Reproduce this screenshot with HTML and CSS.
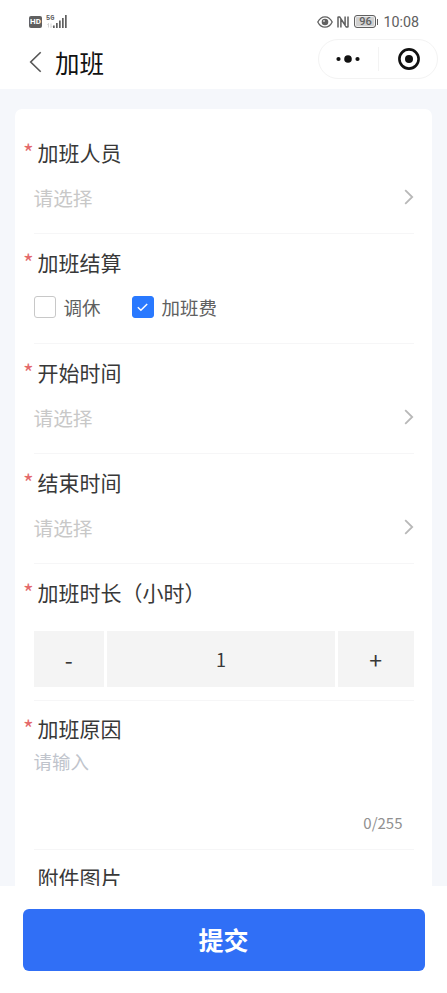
FILE: index.html
```html
<!DOCTYPE html>
<html lang="zh-CN">
<head>
<meta charset="utf-8">
<meta name="viewport" content="width=device-width, initial-scale=1">
<title>加班</title>
<link rel="stylesheet" href="styles.css">
</head>
<body>
<div class="app">
  <header class="header">
    <div class="status">
      <div class="status-left">
        <span class="hd">HD</span>
        <div class="network">
          <span class="network-type">5G</span>
          <svg class="traffic" width="6" height="5" viewBox="0 0 6 5"><path d="M1.5 4.5v-4L.3 1.8M4 .5v4l1.3-1.3" fill="none" stroke="#c2c2c2" stroke-width=".7"/></svg>
        </div>
        <svg class="signal" width="14" height="13" viewBox="0 0 14 13" fill="#606060"><path d="M0 10.4h1.7V13H0zM3 8h1.7v5H3zM6 5.5h1.7V13H6zM9 3h1.7v10H9zM12 0h1.7v13H12z"/></svg>
      </div>
      <div class="status-right">
        <svg class="eye" width="16" height="12" viewBox="0 0 16 12"><path d="M.8 6C2.500 2.500 5 .8 8 .8S13.500 2.500 15.200 6C13.500 9.500 11 11.200 8 11.200S2.500 9.500.8 6z" fill="none" stroke="#606060" stroke-width="1.300"/><circle cx="8" cy="6" r="3.300" fill="#606060"/><circle cx="7" cy="4.900" r="1" fill="#ccc"/></svg>
        <svg class="nfc" width="12" height="12" viewBox="0 0 12 12" fill="none" stroke="#606060" stroke-width="1.500"><path d="M1 11.500V1.300Q1 .9 1.400.9h1.300l5.400 8.200V.5M11 .5v10.200q0 .4-.4.4H9.300L3.900 2.900v8.600"/></svg>
        <div class="battery">96</div>
        <span class="battery-tip"></span>
        <span class="time">10:08</span>
      </div>
    </div>
    <nav class="nav">
      <svg class="back" width="13" height="22" viewBox="0 0 13 22"><path d="M11.700 1.200 1.700 11l10 9.800" fill="none" stroke="#555" stroke-width="1.600"/></svg>
      <h1 class="title">加班</h1>
      <div class="capsule">
        <svg class="more" width="24" height="8" viewBox="0 0 24 8" fill="#111"><circle cx="2.500" cy="4" r="2.100"/><circle cx="12" cy="4" r="3.800"/><circle cx="21.500" cy="4" r="2.100"/></svg>
        <span class="capsule-line"></span>
        <svg class="close" width="22" height="22" viewBox="0 0 22 22"><circle cx="11" cy="11" r="9.600" fill="none" stroke="#111" stroke-width="2.600"/><circle cx="11" cy="11" r="4" fill="#111"/></svg>
      </div>
    </nav>
  </header>

  <main class="content">
    <form class="card">
      <section class="item">
        <div class="label required">加班人员</div>
        <div class="value select">请选择<svg class="arrow" width="10" height="16" viewBox="0 0 10 16"><path d="m1.200 1.200 7 6.800-7 6.800"/></svg></div>
      </section>
      <section class="item">
        <div class="label required">加班结算</div>
        <div class="value options">
          <span class="option"><i class="box"></i>调休</span>
          <span class="option"><i class="box checked"><svg width="11" height="9" viewBox="0 0 11 9"><path d="m.8 4.300 3.100 3L10.200 1" fill="none" stroke="#fff" stroke-width="1.500"/></svg></i>加班费</span>
        </div>
      </section>
      <section class="item">
        <div class="label required">开始时间</div>
        <div class="value select">请选择<svg class="arrow" width="10" height="16" viewBox="0 0 10 16"><path d="m1.200 1.200 7 6.800-7 6.800"/></svg></div>
      </section>
      <section class="item">
        <div class="label required">结束时间</div>
        <div class="value select">请选择<svg class="arrow" width="10" height="16" viewBox="0 0 10 16"><path d="m1.200 1.200 7 6.800-7 6.800"/></svg></div>
      </section>
      <section class="item duration">
        <div class="label required">加班时长（小时）</div>
        <div class="stepper">
          <span class="step">-</span>
          <span class="step count">1</span>
          <span class="step">+</span>
        </div>
      </section>
      <section class="item reason">
        <div class="label required">加班原因</div>
        <div class="textarea">请输入</div>
        <div class="counter">0/255</div>
      </section>
      <section class="item attachment">
        <div class="label">附件图片</div>
      </section>
    </form>
  </main>

  <footer class="footer">
    <button class="submit" type="button">提交</button>
  </footer>
</div>
</body>
</html>
```

FILE: styles.css
```css
* {
  box-sizing: border-box;
}

body {
  margin: 0;
  font-family: "Noto Sans CJK SC", sans-serif;
  color: #383838;
  background: #f5f7fb;
}

svg {
  display: block;
  flex: none;
}

.app {
  display: flex;
  flex-direction: column;
  height: 993px;
  overflow: hidden;
}

.header {
  flex: none;
  height: 89px;
  background: #fff;
}

.status {
  display: flex;
  justify-content: space-between;
  height: 39px;
  padding: 4px 29px 0;
}

.status-left,
.status-right {
  display: flex;
  align-items: center;
  color: #606060;
  font-family: Roboto, sans-serif;
}

.hd {
  width: 13px;
  height: 12px;
  border-radius: 2px;
  background: #606060;
  color: #fff;
  font-size: 8px;
  font-weight: 700;
  line-height: 12px;
  text-align: center;
}

.network {
  width: 8px;
  height: 13px;
  margin-left: 4px;
}

.network-type {
  display: block;
  height: 8px;
  font-family: "Liberation Mono", monospace;
  font-size: 7px;
  font-weight: 700;
  line-height: 7px;
}

.traffic {
  margin-left: 1px;
}

.signal {
  margin-left: -1px;
}

.nfc {
  margin-left: 4px;
}

.battery {
  width: 22px;
  height: 13px;
  margin-left: 5px;
  border: 1px solid #606060;
  border-radius: 3px;
  box-shadow: inset 0 0 0 1px #eee;
  background: #d0d0d0;
  font-size: 11px;
  font-weight: 500;
  line-height: 12px;
  text-align: center;
}

.battery-tip {
  width: 1px;
  height: 6px;
  margin-left: 1px;
  background: #606060;
}

.time {
  margin: 1px -1px 0 5px;
  font-size: 14.3px;
  line-height: 20px;
}

.nav {
  display: flex;
  align-items: center;
  height: 40px;
  padding: 0 9px 0 29px;
}

.back {
  margin-top: 6px;
}

.title {
  margin: 8px 0 0 13px;
  color: #111;
  font-size: 24.5px;
  font-weight: 400;
  line-height: 36px;
}

.capsule {
  display: flex;
  align-items: center;
  width: 120px;
  height: 40px;
  margin-left: auto;
  padding: 0 17px;
  border: 1px solid #f3f3f3;
  border-radius: 20px;
}

.capsule-line {
  width: 1px;
  height: 24px;
  margin-left: 18px;
  background: #f3f3f3;
}

.close {
  margin-left: auto;
}

.content {
  flex: 1;
  min-height: 0;
  padding: 20px 15px 0;
  overflow: hidden;
}

.card {
  min-height: 800px;
  padding: 15px 18.5px 0;
  border-radius: 7px;
  background: #fff;
}

.item {
  height: 110px;
  padding-top: 13px;
  border-bottom: 1px solid #f6f6f7;
}

.label {
  position: relative;
  padding-left: 4px;
  font-size: 21px;
  line-height: 30px;
}

.required::before {
  position: absolute;
  top: 0;
  left: -10.5px;
  color: #e4696b;
  font-size: 23px;
  content: "*";
}

.value {
  display: flex;
  align-items: center;
  height: 30px;
  margin-top: 15px;
}

.select {
  justify-content: space-between;
  color: #c8c8c8;
  font-size: 19.7px;
}

.arrow path {
  fill: none;
  stroke: #b8b8b8;
  stroke-width: 1.8;
}

.options {
  gap: 31px;
  color: #606060;
  font-size: 18.5px;
}

.option {
  display: flex;
  align-items: center;
  gap: 7.5px;
}

.box {
  display: flex;
  align-items: center;
  justify-content: center;
  width: 22.5px;
  height: 22.5px;
  border: 1px solid #c8c8c8;
  border-radius: 3px;
}

.checked {
  border-color: #2979ff;
  background: #2979ff;
}

.duration {
  height: 137px;
}

.stepper {
  display: grid;
  grid-template-columns: 70.5px 1fr 75.5px;
  gap: 3px;
  height: 56px;
  margin-top: 24px;
}

.step {
  display: flex;
  align-items: center;
  justify-content: center;
  background: #f4f4f4;
  font-size: 23px;
}

.count {
  font-size: 18px;
}

.reason {
  height: 149px;
  padding-top: 12px;
}

.textarea {
  height: 64px;
  margin-top: 4px;
  color: #c0c4cc;
  font-size: 18.5px;
  line-height: 28px;
}

.counter {
  padding-right: 11px;
  color: #909090;
  font-size: 15px;
  line-height: 24px;
  text-align: right;
}

.attachment {
  padding-top: 12px;
}

.footer {
  flex: none;
  height: 107px;
  padding: 23px 22.5px 0;
  background: #fff;
}

.submit {
  display: block;
  width: 100%;
  height: 61.5px;
  padding: 0 0 2px;
  border: 0;
  border-radius: 6px;
  background: #306ff6;
  color: #fff;
  font-family: inherit;
  font-size: 25px;
  font-weight: 700;
}
```
